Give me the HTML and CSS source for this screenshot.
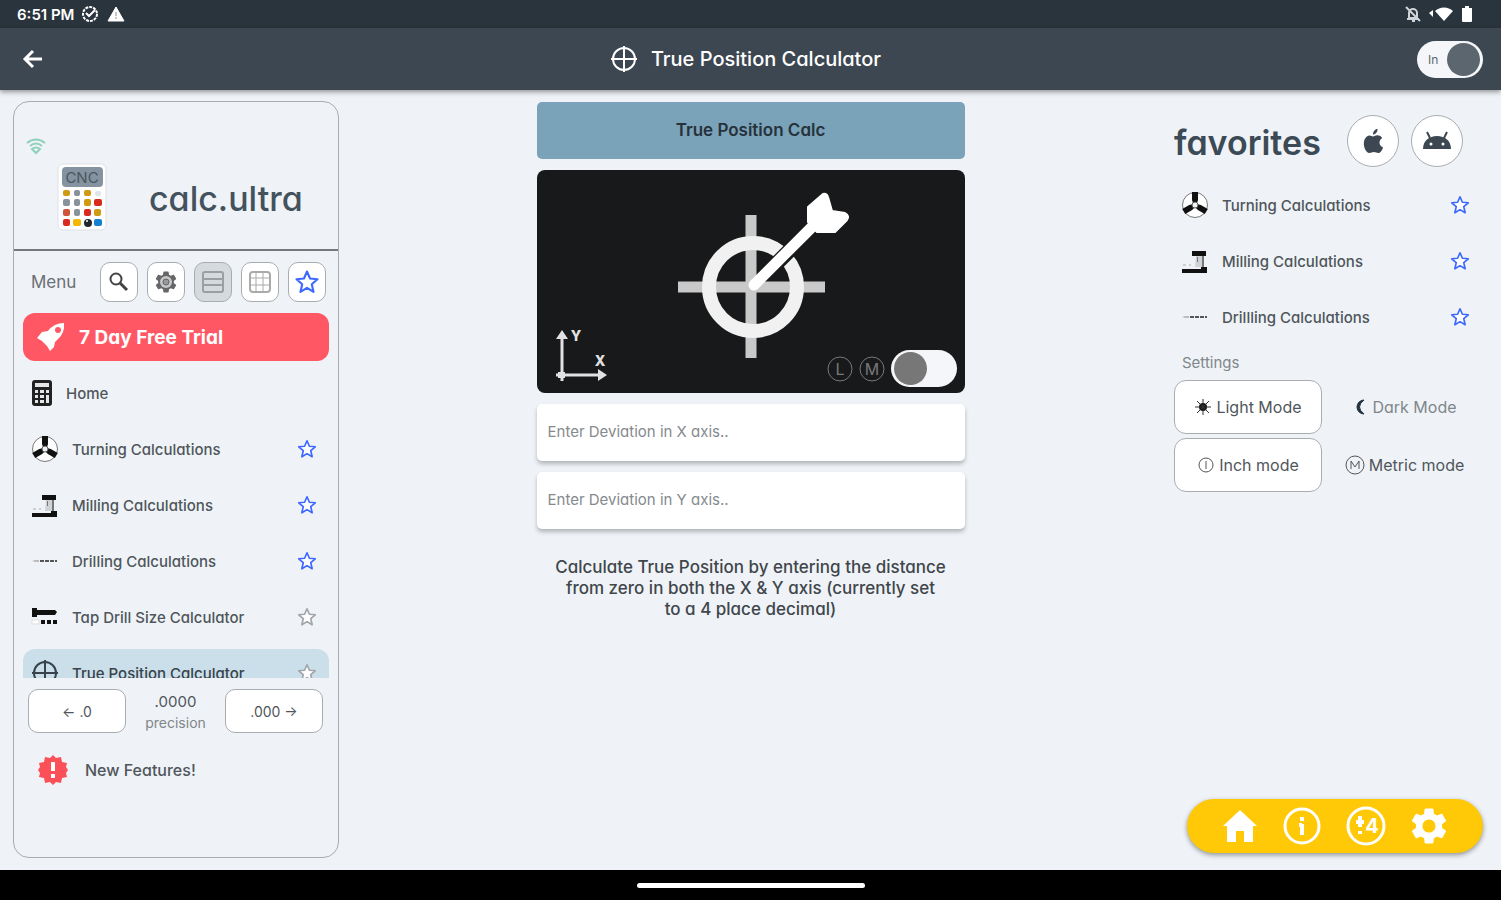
FILE: index.html
```html
<!DOCTYPE html>
<html lang="en">
<head>
  <meta charset="UTF-8" />
  <meta name="viewport" content="width=device-width, initial-scale=1.0"/>
  <title>True Position Calculator</title>
  <link rel="stylesheet" href="styles.css">
</head>
<body>

  <!-- shared icons -->
  <svg class="sprite" aria-hidden="true">
    <symbol id="star" viewBox="0 0 24 24">
      <path d="M12 3l2.6 6 6.4.6-4.9 4.3 1.5 6.6L12 17l-5.6 3.5 1.5-6.6L3 9.600l6.400-.6z" fill="#fff" stroke="currentColor" stroke-width="1.800" stroke-linejoin="round"/>
    </symbol>
    <symbol id="chuck" viewBox="0 0 28 28">
      <circle cx="14" cy="14" r="12.500" fill="#fff" stroke="#777" stroke-width="1"/>
      <g id="jaw"><path d="M11 1h6v8l-1 3h-4l-1-3z" fill="#111"/></g>
      <use href="#jaw" transform="rotate(120 14 14)"/>
      <use href="#jaw" transform="rotate(240 14 14)"/>
      <circle cx="14" cy="14" r="3" fill="#eef3f7" stroke="#555"/>
    </symbol>
    <symbol id="mill" viewBox="0 0 28 28">
      <path d="M11 4h14v5H11z" fill="#111"/>
      <path d="M15 9h6l1 11h-8z" fill="#d0d3d6"/>
      <path d="M21 9h2v11h-2zM16 10h1v5h-1z" fill="#777"/>
      <path d="M1 22h19v-2h6v6H1z" fill="#111"/>
      <path d="M2 18h3M8 18h2" stroke="#aaa"/>
    </symbol>
    <symbol id="drill" viewBox="0 0 28 28">
      <path d="M1 14l3-1h4v2H4z" fill="#bbb"/>
      <path d="M9 14h17" stroke="#555" stroke-width="2" stroke-dasharray="4 1"/>
    </symbol>
    <symbol id="tap" viewBox="0 0 28 28">
      <path d="M1 5h5v2h18l2 2-2 3H6v2H1z" fill="#111"/>
      <path d="M1 17h7v4H1z" fill="#fff" stroke="#ddd"/>
      <path d="M10 19h16" stroke="#111" stroke-width="4" stroke-dasharray="4 2"/>
    </symbol>
    <symbol id="target" viewBox="0 0 28 28">
      <g fill="none" stroke="currentColor" stroke-width="2">
        <circle cx="14" cy="14" r="11"/>
        <path d="M14 1v26M1 14h26"/>
      </g>
    </symbol>
    <symbol id="gear" viewBox="1 1 22 22">
      <path fill="currentColor" fill-rule="evenodd" d="M19.140 12.940c.04-.3.06-.61.06-.94s-.02-.64-.07-.94l2.030-1.580a.5.5 0 0 0 .12-.61l-1.920-3.320a.5.5 0 0 0-.59-.22l-2.390.96a7 7 0 0 0-1.620-.94l-.36-2.540A.48.48 0 0 0 13.920 2.400h-3.840a.48.48 0 0 0-.48.410l-.36 2.540c-.59.24-1.130.57-1.620.94l-2.390-.96a.48.48 0 0 0-.59.220L2.720 8.870a.48.48 0 0 0 .12.610l2.030 1.580c-.05.3-.07.62-.07.94s.02.64.07.94l-2.030 1.580a.5.5 0 0 0-.12.610l1.920 3.320c.12.220.37.290.59.220l2.390-.96c.5.380 1.030.7 1.620.94l.36 2.540c.05.240.24.410.48.410h3.840c.24 0 .44-.17.470-.41l.36-2.540a7 7 0 0 0 1.620-.94l2.390.96c.22.080.47 0 .59-.22l1.920-3.320a.48.48 0 0 0-.12-.61zM12 15.600A3.600 3.600 0 1 1 12 8.400a3.600 3.600 0 0 1 0 7.200z"/>
    </symbol>
  </svg>

  <div class="status-bar">
    <div class="status-left">
      <span>6:51 PM</span>
      <svg width="18" height="18" viewBox="0 0 18 18" fill="none" stroke="#fff"><circle cx="9" cy="9" r="7" stroke-width="2" stroke-dasharray="3 1"/><path d="M5 8l3 3 6-6" stroke-width="2"/></svg>
      <svg width="20" height="18" viewBox="0 0 20 18"><path d="M10 2l8 14H2z" fill="#fff" stroke="#fff" stroke-linejoin="round"/><path d="M10 7v4M10 12v2" stroke="#8a9298" stroke-width="1"/></svg>
    </div>
    <div class="status-right">
      <svg width="16" height="18" viewBox="0 0 16 18" fill="none" stroke="#cfd4d8" stroke-width="2"><path d="M4 13V8a4 4 0 0 1 8 0v5zM2 14h12M7 16h3M1 2l14 14"/></svg>
      <svg width="26" height="18" viewBox="0 0 26 18" fill="#fff"><path d="M1 8l4-3v7zM7 6a13 13 0 0 1 18 0l-9 10z"/></svg>
      <svg width="12" height="18" viewBox="0 0 12 18" fill="#fff"><path d="M4 1h4v2h3v13q0 1-1 1H2q-1 0-1-1V3h3z"/></svg>
    </div>
  </div>

  <header class="app-bar">
    <button class="back" aria-label="Back">
      <svg width="22" height="22" viewBox="0 0 22 22" fill="none" stroke="#fff" stroke-width="3"><path d="M20 11H4M11 3l-8 8 8 8"/></svg>
    </button>
    <h1><svg width="28" height="28"><use href="#target"/></svg>True Position Calculator</h1>
    <label class="switch on">
      <input type="checkbox" aria-label="Inch" checked>
      <span class="switch-text">In</span>
    </label>
  </header>

  <main>
    <aside class="sidebar">
      <div class="brand">
        <svg class="wifi" width="20" height="18" viewBox="0 0 20 18" fill="none" stroke="#8fd0bb" stroke-width="2"><path d="M1 6q9-7 18 0M4 9q6-5 12 0M10 16l-4-4q4-3 8 0z"/></svg>
        <div class="brand-row">
          <svg width="50" height="68" viewBox="0 0 50 68">
            <rect x="1" y="1" width="48" height="66" rx="5" fill="#fff" stroke="#dde1e4"/>
            <rect x="5" y="4" width="41" height="20" rx="4" fill="#84939f"/>
            <text x="25" y="20" text-anchor="middle" font-size="15" font-family="Inter, sans-serif" fill="#4a565f">CNC</text>
            <g fill="#cf9a12"><rect x="6" y="27" width="7" height="6" rx="2"/><rect x="27" y="27" width="7" height="6" rx="2"/><rect x="27" y="36" width="7" height="7" rx="2"/><rect x="37" y="46" width="7" height="7" rx="2"/></g>
            <g fill="#87929b"><rect x="17" y="27" width="6" height="6" rx="2"/><rect x="6" y="36" width="7" height="7" rx="2"/><rect x="17" y="36" width="6" height="7" rx="2"/><rect x="17" y="46" width="6" height="7" rx="2"/></g>
            <rect x="38" y="28" width="6" height="5" rx="2" fill="#dfe5ea"/>
            <g fill="#d92a20"><rect x="37" y="36" width="8" height="7" rx="2"/><rect x="27" y="46" width="7" height="7" rx="2"/><rect x="6" y="56" width="7" height="7" rx="2"/></g>
            <rect x="6" y="46" width="7" height="7" rx="2" fill="#d0543c"/>
            <rect x="16" y="56" width="8" height="7" rx="2" fill="#f4b800"/>
            <circle cx="31" cy="60" r="4" fill="#20272d"/><circle cx="30" cy="58" r="1" fill="#fff"/>
            <rect x="37" y="56" width="8" height="7" rx="2" fill="#1681d0"/>
          </svg>
          <span class="brand-name">calc.ultra</span>
        </div>
      </div>

      <div class="toolbar">
        <span class="toolbar-label">Menu</span>
        <button aria-label="Search"><svg width="22" height="22" viewBox="0 0 22 22" fill="none" stroke="#444"><circle cx="8" cy="8" r="5.500" stroke-width="2"/><path d="M12 12l7 7" stroke-width="3"/></svg></button>
        <button aria-label="Settings"><svg width="24" height="24" viewBox="0 0 24 24"><use href="#gear" color="#666"/><circle cx="12" cy="12" r="6" fill="#c4c7c9"/><circle cx="12" cy="12" r="3" fill="#999" stroke="#666"/></svg></button>
        <button class="active" aria-label="List view"><svg width="24" height="24" viewBox="0 0 24 24" fill="none" stroke="#9a9fa3" stroke-width="2"><rect x="2" y="2" width="20" height="20" rx="2"/><path d="M2 9h20M2 15h20"/></svg></button>
        <button aria-label="Grid view"><svg width="24" height="24" viewBox="0 0 24 24" fill="none" stroke="#aaa"><rect x="2" y="2" width="20" height="20" rx="3" stroke-width="2"/><path d="M8 2v20M15 2v20M2 8h20M2 15h20"/></svg></button>
        <button class="starred" aria-label="Favorites"><svg width="28" height="28"><use href="#star"/></svg></button>
      </div>

      <nav class="menu">
        <a class="trial" href="#trial">
          <svg width="30" height="30" viewBox="0 0 30 30"><path fill="#fff" fill-rule="evenodd" d="M28 1q1 10-6 16l-3 3-1 5-4 4-3-5-5-5-5-3 5-6 6-1q6-8 16-8zM22 5a3 3 0 1 0 0 6 3 3 0 0 0 0-6z"/></svg>
          7 Day Free Trial
        </a>
        <div class="row home">
          <a href="#home">
            <svg width="22" height="28" viewBox="0 0 22 28"><rect x="1" y="1" width="20" height="26" rx="3" fill="#222"/><path d="M4 4h14v4H4zM4 11h3v3H4zM9 11h4v3H9zM15 11h3v3h-3zM4 16h3v3H4zM9 16h4v3H9zM4 21h3v3H4zM9 21h4v3H9zM15 16h3v8h-3z" fill="#e3e7ea"/></svg>
            Home
          </a>
        </div>
        <div class="row">
          <a href="#turning"><svg width="28" height="28"><use href="#chuck"/></svg>Turning Calculations</a>
          <button class="starred" aria-label="Remove favorite"><svg width="22" height="22"><use href="#star"/></svg></button>
        </div>
        <div class="row">
          <a href="#milling"><svg width="28" height="28"><use href="#mill"/></svg>Milling Calculations</a>
          <button class="starred" aria-label="Remove favorite"><svg width="22" height="22"><use href="#star"/></svg></button>
        </div>
        <div class="row">
          <a href="#drilling"><svg width="28" height="28"><use href="#drill"/></svg>Drilling Calculations</a>
          <button class="starred" aria-label="Remove favorite"><svg width="22" height="22"><use href="#star"/></svg></button>
        </div>
        <div class="row">
          <a href="#tap-drill"><svg width="28" height="28"><use href="#tap"/></svg>Tap Drill Size Calculator</a>
          <button aria-label="Add favorite"><svg width="22" height="22"><use href="#star"/></svg></button>
        </div>
        <div class="row selected">
          <a href="#true-position"><svg width="28" height="28"><use href="#target"/></svg>True Position Calculator</a>
          <button aria-label="Add favorite"><svg width="22" height="22"><use href="#star"/></svg></button>
        </div>
      </nav>

      <div class="precision">
        <button>← .0</button>
        <div class="precision-value"><span>.0000</span><small>precision</small></div>
        <button>.000 →</button>
      </div>

      <a class="features" href="#features">
        <svg width="32" height="32" viewBox="0 0 32 32"><path d="M16 1l3 3 5-1 1 5 5 1-1 4 2 3-2 3 1 4-5 1-1 5-5-1-3 3-3-3-5 1-1-5-5-1 1-4-2-3 2-3-1-4 5-1 1-5 5 1z" fill="#fb5058"/><path d="M16 8v9M16 20v4" stroke="#fff" stroke-width="4"/></svg>
        New Features!
      </a>
    </aside>

    <section class="calculator">
      <h2>True Position Calc</h2>
      <div class="diagram">
        <svg viewBox="0 0 428 223">
          <path d="M214 45v143M141 117h147" stroke="#c9c9c9" stroke-width="11"/>
          <circle cx="216" cy="117" r="44" fill="none" stroke="#f1f1f1" stroke-width="14"/>
          <path d="M232 101l46-46" stroke="#18191a" stroke-width="15"/>
          <path d="M217 115l60-60" stroke="#fff" stroke-width="11" stroke-linecap="round"/>
          <path d="M271 37l15-13q4-1 5 3l4 14 13 2q5 3 2 7l-12 12h-18l-9-10z" fill="#fff" stroke="#fff" stroke-width="2" stroke-linejoin="round"/>
          <g fill="#e2e2e2" stroke="#e2e2e2">
            <path d="M25 165v46M19 205h46" stroke-width="3" fill="none"/>
            <path d="M25 160l6 9H19zM70 205l-9-6v12zM21 202h7v6h-7z" stroke="none"/>
          </g>
          <g class="axis-text">
            <text x="39" y="171">Y</text>
            <text x="63" y="196">X</text>
          </g>
          <g class="condition-text">
            <circle cx="303" cy="199" r="12"/><text x="303" y="205">L</text>
            <circle cx="335" cy="199" r="12"/><text x="335" y="205">M</text>
          </g>
        </svg>
        <label class="switch">
          <input type="checkbox" aria-label="Material condition">
        </label>
      </div>
      <input class="field" type="text" aria-label="Deviation in X axis" placeholder="Enter Deviation in X axis..">
      <input class="field" type="text" aria-label="Deviation in Y axis" placeholder="Enter Deviation in Y axis..">
      <p>Calculate True Position by entering the distance<br>from zero in both the X &amp; Y axis (currently set<br>to a 4 place decimal)</p>
    </section>

    <aside class="favorites">
      <div class="favorites-head">
        <h2>favorites</h2>
        <a class="store" href="#ios" aria-label="iOS app"><svg width="22" height="26" viewBox="0 0 24 28" fill="#3c4751"><path d="M12 9c2 0 3-2 6-1 2 0 3 1 4 3-4 2-4 8 1 10-1 3-3 6-5 6s-3-1-5-1-3 1-5 1c-3 0-6-5-6-10s3-9 6-9c2 0 3 1 4 1zM12 7c0-3 2-6 5-6 0 3-2 6-5 6z"/></svg></a>
        <a class="store" href="#android" aria-label="Android app"><svg width="30" height="22" viewBox="0 0 30 22"><path d="M1 19C1 11 7 6 15 6s14 5 14 13z" fill="#3c4751"/><path d="M8 8L5 2M22 8l3-6" stroke="#3c4751" stroke-width="2"/><circle cx="9" cy="14" r="1.500" fill="#fff"/><circle cx="21" cy="14" r="1.500" fill="#fff"/></svg></a>
      </div>
      <div class="row">
        <a href="#turning"><svg width="28" height="28"><use href="#chuck"/></svg>Turning Calculations</a>
        <button class="starred" aria-label="Remove favorite"><svg width="22" height="22"><use href="#star"/></svg></button>
      </div>
      <div class="row">
        <a href="#milling"><svg width="28" height="28"><use href="#mill"/></svg>Milling Calculations</a>
        <button class="starred" aria-label="Remove favorite"><svg width="22" height="22"><use href="#star"/></svg></button>
      </div>
      <div class="row">
        <a href="#drilling"><svg width="28" height="28"><use href="#drill"/></svg>Drillling Calculations</a>
        <button class="starred" aria-label="Remove favorite"><svg width="22" height="22"><use href="#star"/></svg></button>
      </div>

      <h3>Settings</h3>
      <div class="modes">
        <button class="active"><svg width="18" height="18" viewBox="0 0 18 18"><circle cx="9" cy="9" r="4" fill="#111"/><path d="M9 1v16M1 9h16M3 3l12 12M15 3L3 15" stroke="#333" stroke-width="1"/></svg>Light Mode</button>
        <button class="dark"><svg width="16" height="18" viewBox="0 0 16 18"><path d="M13 2A7 7 0 1 0 13 16Q4 9 13 2z" transform="translate(-1 0)" fill="#22303c" stroke="#22303c"/></svg>Dark Mode</button>
        <button class="active"><svg width="18" height="18" viewBox="0 0 18 18" fill="none" stroke="#555"><circle cx="9" cy="9" r="7"/><path d="M9 5v8"/></svg>Inch mode</button>
        <button><svg width="20" height="20" viewBox="0 0 20 20" fill="none" stroke="#555"><circle cx="10" cy="10" r="9"/><path d="M6 14V6l4 6 4-6v8"/></svg>Metric mode</button>
      </div>

      <nav class="quick-nav">
        <a href="#home" aria-label="Home"><svg width="38" height="38" viewBox="0 0 38 38"><path d="M19 3l17 16h-4v16h-9V24h-8v11H6V19H2z" fill="#fff"/></svg></a>
        <a href="#info" aria-label="Info"><svg width="40" height="40" viewBox="0 0 40 40" fill="none" stroke="#fff" stroke-width="3"><circle cx="20" cy="20" r="17"/><path d="M20 11v4M20 18v11M17 19h3" stroke-width="4"/></svg></a>
        <a href="#precision" aria-label="Precision"><svg width="40" height="40" viewBox="0 0 40 40" fill="none" stroke="#fff"><circle cx="20" cy="20" r="18" stroke-width="3"/><path d="M14 10v11M10 16h8M14 25v3" stroke-width="4"/><text class="quick-digit" x="26" y="27">4</text></svg></a>
        <a href="#settings" aria-label="Settings"><svg width="40" height="40"><use href="#gear"/></svg></a>
      </nav>
    </aside>
  </main>

  <div class="gesture-bar"><span></span></div>

</body>
</html>
```

FILE: styles.css
```css
* {
  box-sizing: border-box;
}

body {
  margin: 0;
  height: 100vh;
  display: flex;
  flex-direction: column;
  font-family: Inter, sans-serif;
  font-feature-settings: "cv11";
  font-size: 15px;
  color: #50565b;
  background-color: #eff3f7;
}

h1, h2, h3, p {
  margin: 0;
}

a {
  color: inherit;
  text-decoration: none;
}

button {
  padding: 0;
  border: none;
  background: none;
  font: inherit;
  font-feature-settings: inherit;
  color: inherit;
  cursor: pointer;
}

svg {
  display: block;
  flex: none;
}

.sprite {
  position: absolute;
  width: 0;
  height: 0;
}

/* top bars */
.status-bar {
  flex: none;
  height: 28px;
  padding: 0 28px 0 17px;
  display: flex;
  align-items: center;
  justify-content: space-between;
  background: #2a343d;
  color: #fff;
  font-weight: 600;
}

.status-left,
.status-right {
  display: flex;
  align-items: center;
  gap: 7px;
}

.app-bar {
  flex: none;
  height: 62px;
  padding: 0 18px 0 22px;
  display: grid;
  grid-template-columns: 1fr auto 1fr;
  align-items: center;
  background: #3c4752;
  color: #fff;
  box-shadow: 0 2px 5px rgba(0, 0, 0, 0.4);
}

.back {
  justify-self: start;
}

.app-bar h1 {
  display: flex;
  align-items: center;
  gap: 13px;
  padding-right: 14px;
  font-size: 20px;
  font-weight: 500;
}

.switch {
  position: relative;
  width: 66px;
  height: 37px;
  border-radius: 19px;
  background: #f5f6f9;
}

.app-bar .switch {
  justify-self: end;
}

.switch input {
  appearance: none;
  display: block;
  width: 33px;
  height: 33px;
  margin: 2px 3px;
  border-radius: 50%;
  background: #777;
  cursor: pointer;
}

.switch input:checked {
  margin-left: 30px;
  background: #5b666e;
}

.switch-text {
  position: absolute;
  left: 11px;
  top: 11px;
  font-size: 12px;
  line-height: 15px;
  color: #5b666e;
}

/* page columns */
main {
  flex: 1;
  min-height: 0;
  display: grid;
  grid-template-columns: 326px minmax(0, 428px) 326px;
  justify-content: space-between;
  padding: 11px 13px 12px;
}

/* sidebar */
.sidebar {
  min-height: 0;
  display: flex;
  flex-direction: column;
  border: 1px solid #a9adb0;
  border-radius: 16px;
  overflow: hidden;
}

.brand {
  flex: none;
  padding: 35px 0 18px 12px;
  border-bottom: 2px solid #75797c;
}

.brand-row {
  display: flex;
  align-items: center;
  gap: 42px;
  padding: 8px 0 0 31px;
}

.brand-name {
  padding-top: 4px;
  font-size: 34px;
  font-weight: 500;
  line-height: 40px;
  color: #44525e;
}

.toolbar {
  flex: none;
  display: flex;
  align-items: center;
  gap: 9px;
  padding: 11px 12px 11px 17px;
}

.toolbar-label {
  flex: 1;
  font-size: 17px;
  color: #6a7074;
}

.toolbar button {
  width: 38px;
  height: 40px;
  display: grid;
  place-items: center;
  border: 1px solid #a9adb0;
  border-radius: 10px;
  background: #fff;
}

.toolbar button.active {
  background: #d5dadf;
}

.menu {
  flex: 1;
  min-height: 0;
  display: flex;
  flex-direction: column;
  gap: 8px;
  padding: 0 9px;
  overflow-y: auto;
  scrollbar-width: none;
}

.trial {
  flex: none;
  height: 48px;
  display: flex;
  align-items: center;
  gap: 13px;
  padding: 0 13px;
  border-radius: 12px;
  background: #ff5864;
  color: #fff;
  font-size: 19px;
  font-weight: 700;
}

.row {
  flex: none;
  height: 48px;
  display: flex;
  align-items: center;
  justify-content: space-between;
  padding: 0 11px 0 8px;
  font-weight: 500;
}

.row a {
  display: flex;
  align-items: center;
  gap: 13px;
}

.row button {
  color: #a0a5a9;
}

.toolbar button.starred,
.row button.starred {
  color: #3d68ff;
}

.row.selected {
  border-radius: 12px;
  background: #cbdfea;
  color: #38434b;
}

.precision {
  flex: none;
  display: flex;
  align-items: center;
  justify-content: space-between;
  padding: 11px 15px 0 14px;
}

.precision button {
  width: 98px;
  height: 44px;
  border: 1px solid #a9adb0;
  border-radius: 10px;
  background: #fff;
  font-size: 14px;
}

.precision-value {
  display: flex;
  flex-direction: column;
  align-items: center;
  gap: 3px;
}

.precision-value small {
  font-size: 14px;
  color: #80868a;
}

.features {
  flex: none;
  display: flex;
  align-items: center;
  gap: 16px;
  padding: 21px 23px 71px;
  font-size: 16px;
  font-weight: 500;
}

/* calculator */
.calculator {
  display: flex;
  flex-direction: column;
  gap: 11px;
  padding-top: 1px;
}

.calculator h2 {
  flex: none;
  height: 57px;
  border-radius: 5px;
  background: #7aa2b9;
  color: #26323b;
  font-size: 17px;
  font-weight: 600;
  line-height: 57px;
  text-align: center;
}

.diagram {
  position: relative;
  border-radius: 8px;
  background: #18191a;
}

.diagram .switch {
  position: absolute;
  right: 8px;
  bottom: 6px;
}

.axis-text {
  fill: #e2e2e2;
  font-size: 14px;
  font-weight: 800;
  text-anchor: middle;
}

.condition-text {
  fill: none;
  stroke: #77797b;
  font-size: 16px;
  text-anchor: middle;
}

.condition-text text {
  fill: #77797b;
  stroke: none;
}

.field {
  flex: none;
  width: 100%;
  height: 57px;
  padding: 0 11px 2px;
  border: none;
  border-radius: 5px;
  background: #fff;
  box-shadow: 0 3px 4px rgba(0, 0, 0, 0.25);
  font: inherit;
  font-feature-settings: inherit;
  color: #38434b;
}

.field::placeholder {
  color: #858a8e;
}

.calculator p {
  padding-top: 17px;
  font-size: 17px;
  font-weight: 500;
  line-height: 21px;
  text-align: center;
  color: #40464b;
}

/* favorites */
.favorites {
  display: flex;
  flex-direction: column;
  gap: 8px;
  padding: 0 5px 5px 12px;
}

.favorites-head {
  display: flex;
  align-items: center;
  gap: 12px;
  padding: 14px 20px 6px 0;
}

.favorites-head h2 {
  flex: 1;
  padding-top: 4px;
  font-size: 34px;
  font-weight: 600;
  line-height: 40px;
  color: #3c4a56;
}

.store {
  width: 52px;
  height: 52px;
  display: grid;
  place-items: center;
  border: 1px solid #a9adb0;
  border-radius: 50%;
  background: #fff;
}

.favorites .row {
  padding: 0 12px 0 7px;
}

.favorites h3 {
  padding: 5px 8px 0;
  font-size: 15px;
  font-weight: 400;
  line-height: 18px;
  color: #80868a;
}

.modes {
  display: grid;
  grid-template-columns: 148px 1fr;
  gap: 4px;
}

.modes button {
  height: 54px;
  display: flex;
  align-items: center;
  justify-content: center;
  gap: 4px;
  border-radius: 12px;
  font-size: 16px;
}

.modes .active {
  border: 1px solid #a9adb0;
  background: #fff;
}

.modes .dark {
  color: #80868a;
}

.quick-nav {
  align-self: flex-end;
  width: 296px;
  height: 54px;
  margin-top: auto;
  padding: 0 34px;
  display: flex;
  align-items: center;
  justify-content: space-between;
  border-radius: 27px;
  background: #ffc907;
  color: #fff;
  box-shadow: 0 2px 5px rgba(0, 0, 0, 0.4);
}

.quick-digit {
  fill: #fff;
  stroke: none;
  font-size: 20px;
  font-weight: 700;
  text-anchor: middle;
}

/* system gesture bar */
.gesture-bar {
  flex: none;
  height: 30px;
  display: grid;
  place-items: center;
  background: #000;
}

.gesture-bar span {
  width: 228px;
  height: 5px;
  border-radius: 3px;
  background: #fff;
}
```
